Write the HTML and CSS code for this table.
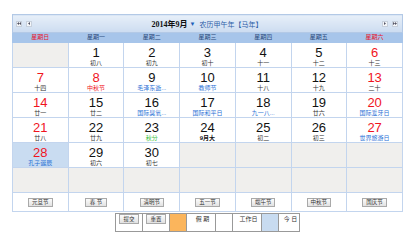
FILE: index.html
```html
<!DOCTYPE html>
<html lang="zh">
<head>
<meta charset="utf-8">
<link rel="stylesheet" href="styles.css">
</head>
<body>
<div class="wrap">
  <table class="cal">
    <thead>
      <tr class="nav-row">
        <th colspan="7">
          <div class="nav">
            <div class="btns">
              <span class="nb"><svg width="4" height="3" viewBox="0 0 4 3"><path d="M2 0L0 1.5L2 3ZM4 0L2 1.5L4 3Z" fill="#556"/></svg></span>
              <span class="nb"><svg width="2" height="3" viewBox="0 0 2 3"><path d="M2 0L0 1.5L2 3Z" fill="#556"/></svg></span>
            </div>
            <div class="title">
              <span class="ym">2014年9月</span><span class="arrow">▼</span><span class="lunar-year">农历甲午年【马年】</span>
            </div>
            <div class="btns">
              <span class="nb"><svg width="2" height="3" viewBox="0 0 2 3"><path d="M0 0L2 1.5L0 3Z" fill="#556"/></svg></span>
              <span class="nb"><svg width="4" height="3" viewBox="0 0 4 3"><path d="M0 0L2 1.5L0 3ZM2 0L4 1.5L2 3Z" fill="#556"/></svg></span>
            </div>
          </div>
        </th>
      </tr>
      <tr class="wk">
        <th class="we">星期日</th><th>星期一</th><th>星期二</th><th>星期三</th><th>星期四</th><th>星期五</th><th class="we">星期六</th>
      </tr>
    </thead>
    <tbody>
      <tr>
        <td class="blank"></td>
        <td><span class="num">1</span><span class="lu">初八</span></td>
        <td><span class="num">2</span><span class="lu">初九</span></td>
        <td><span class="num">3</span><span class="lu">初十</span></td>
        <td><span class="num">4</span><span class="lu">十一</span></td>
        <td><span class="num">5</span><span class="lu">十二</span></td>
        <td><span class="num red">6</span><span class="lu">十三</span></td>
      </tr>
      <tr>
        <td><span class="num red">7</span><span class="lu">十四</span></td>
        <td><span class="num red">8</span><span class="lu redl">中秋节</span></td>
        <td><span class="num">9</span><span class="lu fest">毛泽东逝...</span></td>
        <td><span class="num">10</span><span class="lu fest">教师节</span></td>
        <td><span class="num">11</span><span class="lu">十八</span></td>
        <td><span class="num">12</span><span class="lu">十九</span></td>
        <td><span class="num red">13</span><span class="lu">二十</span></td>
      </tr>
      <tr>
        <td><span class="num red">14</span><span class="lu">廿一</span></td>
        <td><span class="num">15</span><span class="lu">廿二</span></td>
        <td><span class="num">16</span><span class="lu fest">国际臭氧...</span></td>
        <td><span class="num">17</span><span class="lu fest">国际和平日</span></td>
        <td><span class="num">18</span><span class="lu fest">九一八...</span></td>
        <td><span class="num">19</span><span class="lu">廿六</span></td>
        <td><span class="num red">20</span><span class="lu fest">国际爱牙日</span></td>
      </tr>
      <tr>
        <td><span class="num red">21</span><span class="lu">廿八</span></td>
        <td><span class="num">22</span><span class="lu">廿九</span></td>
        <td><span class="num">23</span><span class="lu term">秋分</span></td>
        <td><span class="num">24</span><span class="lu month">9月大</span></td>
        <td><span class="num">25</span><span class="lu">初二</span></td>
        <td><span class="num">26</span><span class="lu">初三</span></td>
        <td><span class="num red">27</span><span class="lu fest">世界旅游日</span></td>
      </tr>
      <tr>
        <td class="today"><span class="num red">28</span><span class="lu fest">孔子诞辰</span></td>
        <td><span class="num">29</span><span class="lu">初六</span></td>
        <td><span class="num">30</span><span class="lu">初七</span></td>
        <td class="blank"></td><td class="blank"></td><td class="blank"></td><td class="blank"></td>
      </tr>
      <tr>
        <td class="blank"></td><td class="blank"></td><td class="blank"></td><td class="blank"></td><td class="blank"></td><td class="blank"></td><td class="blank"></td>
      </tr>
    </tbody>
    <tfoot>
      <tr class="hol">
        <td><span class="btn">元旦节</span></td>
        <td><span class="btn">春 节</span></td>
        <td><span class="btn">清明节</span></td>
        <td><span class="btn">五一节</span></td>
        <td><span class="btn">端午节</span></td>
        <td><span class="btn">中秋节</span></td>
        <td><span class="btn">国庆节</span></td>
      </tr>
    </tfoot>
  </table>
  <table class="legend">
    <tr>
      <td class="c-btn"><span class="btn">提交</span></td>
      <td class="c-btn"><span class="btn">重置</span></td>
      <td class="sw orange"></td>
      <td class="lbl w29">假 期</td>
      <td class="sw white"></td>
      <td class="lbl w29">工作日</td>
      <td class="sw blue"></td>
      <td class="lbl w21">今 日</td>
    </tr>
  </table>
</div>
</body>
</html>
```

FILE: styles.css
```css
html, body {
  margin: 0;
  padding: 0;
  background: #fff;
}
body {
  font-family: "Liberation Sans", "Noto Sans CJK SC", sans-serif;
  color: #222;
}
.wrap {
  padding: 14px 0 0 12px;
  width: 391px;
}
.cal {
  width: 391px;
  border-collapse: collapse;
  table-layout: fixed;
  border: 1px solid #b3c9e6;
}
.cal td, .cal th {
  border: 1px solid #c3d5ee;
  padding: 0;
}
.nav-row th {
  height: 17px;
  background: linear-gradient(#e7eff9, #ccdcf0);
  border-color: #b3c9e6;
}
.nav {
  display: flex;
  align-items: center;
  justify-content: space-between;
  padding: 0 4px 0 3px;
}
.btns {
  display: flex;
  gap: 4px;
}
.nb {
  width: 6px;
  height: 6px;
  box-sizing: border-box;
  border: 1px solid #c7d0dc;
  background: #f4f6f9;
  display: flex;
  align-items: center;
  justify-content: center;
}
.title {
  display: flex;
  align-items: center;
  font-weight: normal;
}
.ym {
  font: bold 8px "Liberation Serif", "Noto Sans CJK SC", serif;
  color: #111;
}
.arrow {
  font-size: 6px;
  color: #1c5fb8;
  margin: 0 4px 0 2px;
}
.lunar-year {
  font-size: 7px;
  color: #2d5fa8;
}
.wk th {
  height: 9px;
  background: #a7c5ea;
  font-size: 6px;
  line-height: 9px;
  font-weight: normal;
  color: #29497a;
  border-color: #a7c5ea;
}
.wk th.we {
  color: #e8142a;
}
tbody td {
  height: 24px;
  vertical-align: top;
  text-align: center;
  background: #fff;
}
.num {
  display: block;
  font: 13px/12px "Liberation Sans", Arial, sans-serif;
  padding-top: 4px;
  color: #111;
}
.num.red {
  color: #f0141e;
}
.lu {
  display: block;
  font-size: 6px;
  line-height: 8px;
  color: #333;
  white-space: nowrap;
}
.lu.fest {
  color: #2a72d6;
}
.lu.redl {
  color: #f0141e;
}
.lu.term {
  color: #3cbf3c;
}
.lu.month {
  color: #111;
  font-weight: bold;
}
td.blank {
  background: #f0efed;
}
td.today {
  background: #c9dcf1;
}
.hol td {
  height: 14px;
  text-align: center;
  vertical-align: middle;
  background: #fff;
}
.btn {
  display: inline-block;
  box-sizing: border-box;
  height: 9px;
  padding: 0 3px;
  min-width: 22px;
  border: 1px solid #a9a9a9;
  background: linear-gradient(#fbfbfb, #e2e2e2);
  font-size: 5.5px;
  line-height: 7px;
  color: #333;
  text-align: center;
  vertical-align: middle;
}
.legend {
  margin: 1px auto 0;
  border-collapse: collapse;
  border: 1px solid #777;
}
.legend td {
  border: 1px solid #999;
  height: 17px;
  padding: 0;
  font-size: 6px;
  color: #333;
}
.legend .c-btn {
  width: 26px;
  text-align: center;
}
.legend .c-btn .btn {
  min-width: 20px;
  height: 10px;
  line-height: 8px;
}
.legend .sw {
  width: 16px;
}
.legend .orange {
  background: #fbb55c;
}
.legend .white {
  background: #fff;
}
.legend .blue {
  background: #c8dbf0;
}
.legend .lbl {
  padding-left: 3px;
}
.legend .w29 {
  width: 25px;
}
.legend .w21 {
  width: 17px;
}
```
